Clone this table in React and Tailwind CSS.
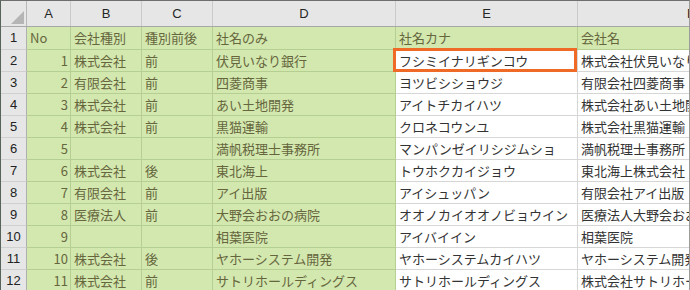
import React from "react";

const rows = [
  ["No", "会社種別", "種別前後", "社名のみ", "社名カナ", "会社名"],
  ["1", "株式会社", "前", "伏見いなり銀行", "フシミイナリギンコウ", "株式会社伏見いなり銀行"],
  ["2", "有限会社", "前", "四菱商事", "ヨツビシショウジ", "有限会社四菱商事"],
  ["3", "株式会社", "前", "あい土地開発", "アイトチカイハツ", "株式会社あい土地開発"],
  ["4", "株式会社", "前", "黒猫運輸", "クロネコウンユ", "株式会社黒猫運輸"],
  ["5", "", "", "満帆税理士事務所", "マンパンゼイリシジムショ", "満帆税理士事務所"],
  ["6", "株式会社", "後", "東北海上", "トウホクカイジョウ", "東北海上株式会社"],
  ["7", "有限会社", "前", "アイ出版", "アイシュッパン", "有限会社アイ出版"],
  ["8", "医療法人", "前", "大野会おおの病院", "オオノカイオオノビョウイン", "医療法人大野会おおの病院"],
  ["9", "", "", "相葉医院", "アイバイイン", "相葉医院"],
  ["10", "株式会社", "後", "ヤホーシステム開発", "ヤホーシステムカイハツ", "ヤホーシステム開発"],
  ["11", "株式会社", "前", "サトリホールディングス", "サトリホールディングス", "株式会社サトリホールディングス"],
];

const font = { fontFamily: '"Noto Sans CJK JP", "Noto Sans", sans-serif' };

function DataCell({ w, green, children, right, selected }) {
  return (
    <div
      className={
        "relative shrink-0 h-full flex items-center whitespace-nowrap border-r border-b text-[13px] " +
        w +
        " " +
        (green
          ? "bg-[#d3e8ae] border-[#b4cf91] text-[#66663e]"
          : "bg-white border-[#d6d6d6] text-[#333333]") +
        " " +
        (right ? "justify-end pr-[2px]" : "pl-[3px]")
      }
    >
      <span className={right ? "" : "overflow-visible"}>{children}</span>
      {selected && (
        <div className="absolute left-[-3px] top-[-2px] w-[184px] h-[24px] border-[3px] border-[#ee6a26] z-10" />
      )}
    </div>
  );
}

export default function App() {
  return (
    <div
      className="w-[690px] h-[290px] overflow-hidden bg-white border-t border-l border-r border-t-[#6e6e6e] border-l-[#56645b] border-r-[#9c9c9c] flex flex-col"
      style={font}
    >
      {/* column header */}
      <div className="flex h-[26px] shrink-0 bg-[#e6e6e6] border-b border-[#a8a8a8] text-[13px] text-[#262626]" style={{ fontFamily: '"Liberation Sans", Arial, sans-serif' }}>
        <div className="relative w-[26px] shrink-0 h-full border-r border-[#b8b8b8]">
          <svg className="absolute left-[10px] top-[10px]" width="13" height="13" viewBox="0 0 13 13">
            <polygon points="13,0 13,13 0,13" fill="#b5b5b5" />
          </svg>
        </div>
        <div className="w-[44px] shrink-0 h-full border-r border-[#cacaca] flex items-center justify-center">A</div>
        <div className="w-[71px] shrink-0 h-full border-r border-[#cacaca] flex items-center justify-center">B</div>
        <div className="w-[71px] shrink-0 h-full border-r border-[#cacaca] flex items-center justify-center">C</div>
        <div className="w-[183px] shrink-0 h-full border-r border-[#cacaca] flex items-center justify-center">D</div>
        <div className="w-[182px] shrink-0 h-full border-r border-[#cacaca] flex items-center justify-center">E</div>
        <div className="w-[226px] shrink-0 h-full flex items-center justify-center">F</div>
      </div>
      {rows.map((r, i) => {
        const first = i === 0;
        return (
          <div key={i} className={"flex shrink-0 " + (first ? "h-[23px]" : "h-[22px]")}>
            <div
              className="w-[26px] shrink-0 h-full bg-[#e6e6e6] border-r border-b border-r-[#b0b0b0] border-b-[#d0d0d0] flex items-center justify-center text-[13px] text-[#222222]"
              style={{ fontFamily: '"Liberation Sans", Arial, sans-serif' }}
            >
              {i + 1}
            </div>
            <DataCell w="w-[44px]" green right={!first}>{r[0]}</DataCell>
            <DataCell w="w-[71px]" green>{r[1]}</DataCell>
            <DataCell w="w-[71px]" green>{r[2]}</DataCell>
            <DataCell w="w-[183px]" green>{r[3]}</DataCell>
            <DataCell w="w-[182px]" green={first} selected={i === 1}>{r[4]}</DataCell>
            <DataCell w="w-[226px]" green={first}>{r[5]}</DataCell>
          </div>
        );
      })}
    </div>
  );
}
